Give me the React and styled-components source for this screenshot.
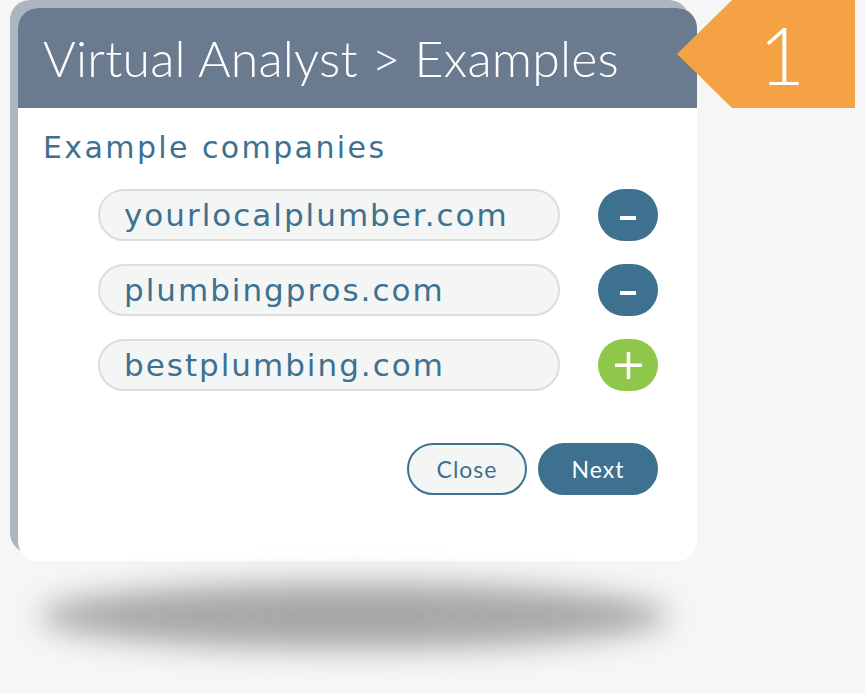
import React from 'react';
import styled, { createGlobalStyle } from 'styled-components';

const GlobalStyle = createGlobalStyle`
  html, body {
    margin: 0;
    padding: 0;
    background: #f5f6f5;
  }
  body {
    font-family: "DejaVu Sans", "Noto Sans", sans-serif;
  }
`;

const BLUE = '#3e7190';

export const Page = styled.div`
  width: 865px;
  height: 693px;
  padding: 8px 0 0 18px;
  box-sizing: border-box;
  overflow: hidden;
`;

export const Stage = styled.div`
  position: relative;
  width: 679px;
`;

export const Card = styled.div`
  background: #ffffff;
  border-radius: 20px;
  box-shadow: -8px -8px 0 0 #abb6c1;
  overflow: hidden;
  height: 553px;
`;

export const Header = styled.div`
  height: 100px;
  background: #6a7b90;
  display: flex;
  align-items: center;
  padding-left: 25px;
`;

export const Title = styled.h1`
  margin: 0;
  color: #ffffff;
  font-family: "Lato", sans-serif;
  font-weight: 300;
  font-size: 50px;
  letter-spacing: 0.2px;
`;

export const Body = styled.div`
  padding: 22px 39px 0 25px;
`;

export const Subtitle = styled.h2`
  margin: 0 0 24px;
  color: ${BLUE};
  font-weight: 400;
  font-size: 30px;
  letter-spacing: 2.4px;
`;

export const List = styled.div`
  display: flex;
  flex-direction: column;
  gap: 23px;
  padding-left: 55px;
`;

export const Row = styled.div`
  display: flex;
  align-items: center;
  justify-content: space-between;
`;

export const Field = styled.div`
  width: 462px;
  height: 52px;
  box-sizing: border-box;
  border: 2px solid #dcdde0;
  border-radius: 26px;
  background: #f4f6f6;
  display: flex;
  align-items: center;
  padding-left: 24px;
  color: ${BLUE};
  font-size: 31px;
  letter-spacing: 2px;
`;

export const RoundButton = styled.button`
  width: 60px;
  height: 52px;
  border: none;
  border-radius: 26px;
  background: ${(p) => (p.$add ? '#8fc74a' : BLUE)};
  display: flex;
  align-items: center;
  justify-content: center;
  padding: 0;
`;

export const Actions = styled.div`
  display: flex;
  justify-content: flex-end;
  gap: 11px;
  margin-top: 52px;
`;

export const PillButton = styled.button`
  width: 120px;
  height: 52px;
  box-sizing: border-box;
  border-radius: 26px;
  border: 2px solid ${BLUE};
  background: ${(p) => (p.$primary ? BLUE : '#f4f6f6')};
  color: ${(p) => (p.$primary ? '#ffffff' : BLUE)};
  font-family: "Lato", sans-serif;
  font-size: 23px;
  font-weight: 400;
  letter-spacing: 1px;
`;

export const Badge = styled.div`
  position: absolute;
  top: -8px;
  left: 659px;
  width: 178px;
  height: 108px;
  background: #f5a245;
  clip-path: polygon(0 54px, 55px 0, 178px 0, 178px 108px, 55px 108px);
  display: flex;
  align-items: center;
  justify-content: center;
  padding-left: 32px;
  box-sizing: border-box;
  color: #ffffff;
  font-family: "Lato", sans-serif;
  font-weight: 300;
  font-size: 80px;
`;

export const Shadow = styled.div`
  margin: 22px 0 0 22px;
  width: 628px;
  height: 66px;
  border-radius: 50%;
  background: #a6a7a6;
  filter: blur(15px);
`;

const Minus = () => (
  <svg width="16" height="12" viewBox="0 0 16 12">
    <rect x="0" y="7" width="16" height="4" fill="#fff" />
  </svg>
);

const Plus = () => (
  <svg width="27" height="27" viewBox="0 0 27 27">
    <rect x="0" y="11.5" width="27" height="3.5" fill="#fff" />
    <rect x="11.75" y="0" width="3.5" height="27" fill="#fff" />
  </svg>
);

const companies = ['yourlocalplumber.com', 'plumbingpros.com', 'bestplumbing.com'];

export default function App() {
  return (
    <>
      <GlobalStyle />
      <Page>
        <Stage>
          <Card>
            <Header>
              <Title>Virtual Analyst &gt; Examples</Title>
            </Header>
            <Body>
              <Subtitle>Example companies</Subtitle>
              <List>
                {companies.map((c, i) => (
                  <Row key={c}>
                    <Field>{c}</Field>
                    <RoundButton $add={i === companies.length - 1}>
                      {i === companies.length - 1 ? <Plus /> : <Minus />}
                    </RoundButton>
                  </Row>
                ))}
              </List>
              <Actions>
                <PillButton>Close</PillButton>
                <PillButton $primary>Next</PillButton>
              </Actions>
            </Body>
          </Card>
          <Badge>1</Badge>
          <Shadow />
        </Stage>
      </Page>
    </>
  );
}
